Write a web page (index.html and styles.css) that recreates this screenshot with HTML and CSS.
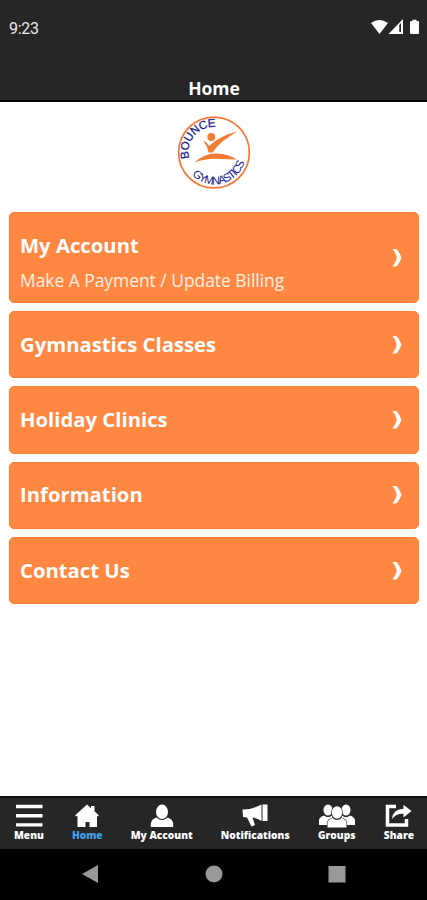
FILE: index.html
```html
<!DOCTYPE html>
<html lang="en">
<head>
  <meta charset="UTF-8">
  <title>Home</title>
  <meta name="viewport" content="width=device-width, initial-scale=1.0">
  <link rel="stylesheet" href="styles.css">
</head>
<body>

  <header class="header">
    <div class="status">
      <span class="time">9:23</span>
      <svg class="status-icons" width="50" height="16" viewBox="0 0 50 16">
        <path d="M0 4Q8-2 17 4L8.500 15z"/>
        <path d="M32 0V15H17.500z"/>
        <path class="signal-gap" d="M28.300 6v7h1.700V4z"/>
        <path d="M39 3q0-1 1-1h1.500V.7h4V2H47q1 0 1 1v11q0 1-1 1h-7q-1 0-1-1z"/>
      </svg>
    </div>
    <h1>Home</h1>
  </header>

  <main>
    <svg class="logo" width="74" height="74" viewBox="0 0 74 74">
      <defs>
        <path id="arc-top" d="M12.200 42.500A25.200 25.200 0 0 1 47 13.200"/>
        <path id="arc-bottom" d="M15 59A31.500 31.500 0 0 0 69 37"/>
      </defs>
      <circle class="ring" cx="37" cy="36.500" r="35.400"/>
      <text class="word-top"><textPath href="#arc-top" textLength="48">BOUNCE</textPath></text>
      <text class="word-bottom"><textPath href="#arc-bottom" textLength="65">GYMNASTICS</textPath></text>
      <circle class="figure" cx="34.300" cy="21" r="3.900"/>
      <path class="figure" d="M26.500 25q3 .5 5.500 5Q43 19.500 60.500 15.500Q43 25 35.500 36.500h-4q-.8-6-5-11.500z"/>
      <path class="figure" d="M17.500 46.500Q28 37 40 37.500Q51 38 60 43.500Q51 43 42 43Q30 42 17.500 46.500z"/>
    </svg>

    <ul class="list">
      <li class="card tall">
        <div>
          <h2>My Account</h2>
          <p>Make A Payment / Update Billing</p>
        </div>
        <svg class="arrow" width="10" height="18" viewBox="0 0 10 18"><path d="M.5 0H4Q6.500 1 9.500 8.800Q6.500 16.500 4 17.500H.5Q4 13 4.800 8.800Q4 4 .5 0z"/></svg>
      </li>
      <li class="card">
        <h2>Gymnastics Classes</h2>
        <svg class="arrow" width="10" height="18" viewBox="0 0 10 18"><path d="M.5 0H4Q6.500 1 9.500 8.800Q6.500 16.500 4 17.500H.5Q4 13 4.800 8.800Q4 4 .5 0z"/></svg>
      </li>
      <li class="card">
        <h2>Holiday Clinics</h2>
        <svg class="arrow" width="10" height="18" viewBox="0 0 10 18"><path d="M.5 0H4Q6.500 1 9.500 8.800Q6.500 16.500 4 17.500H.5Q4 13 4.800 8.800Q4 4 .5 0z"/></svg>
      </li>
      <li class="card">
        <h2>Information</h2>
        <svg class="arrow" width="10" height="18" viewBox="0 0 10 18"><path d="M.5 0H4Q6.500 1 9.500 8.800Q6.500 16.500 4 17.500H.5Q4 13 4.800 8.800Q4 4 .5 0z"/></svg>
      </li>
      <li class="card">
        <h2>Contact Us</h2>
        <svg class="arrow" width="10" height="18" viewBox="0 0 10 18"><path d="M.5 0H4Q6.500 1 9.500 8.800Q6.500 16.500 4 17.500H.5Q4 13 4.800 8.800Q4 4 .5 0z"/></svg>
      </li>
    </ul>
  </main>

  <nav class="tabs">
    <a class="tab">
      <svg width="28" height="24" viewBox="0 0 28 24"><path d="M1 .8h26.500v3.400H1zM1 10h26.500v3.400H1zM1 19.200h26.500v3.400H1z"/></svg>
      <span>Menu</span>
    </a>
    <a class="tab active">
      <svg width="24" height="24" viewBox="0 0 24 24"><path d="M12 .5l4 3.700V2h3.500v5.300L23.500 11v1.200H22V23h-7.500v-5h-4v5H2.500V12.200H.5V11z"/></svg>
      <span>Home</span>
    </a>
    <a class="tab">
      <svg width="24" height="24" viewBox="0 0 24 24"><ellipse cx="12" cy="7.800" rx="6" ry="7.200"/><path d="M.8 23v-3.500Q1.500 15 6.500 13.500Q12 18.500 17.500 13.500Q22.500 15 23.200 19.500V23z"/></svg>
      <span>My Account</span>
    </a>
    <a class="tab">
      <svg width="26" height="24" viewBox="0 0 26 24"><path d="M.5 5.500q8 .5 19-5v16.500Q15 14 10.500 13.500l2.500 7.500-3.500 1.500-4.500-9L1 13z"/><path d="M20.500.5h5v16.500h-5z"/></svg>
      <span>Notifications</span>
    </a>
    <a class="tab">
      <svg class="groups" width="38" height="24" viewBox="0 0 38 24">
        <ellipse cx="10" cy="6" rx="4.500" ry="5.500"/>
        <ellipse cx="28" cy="6" rx="4.500" ry="5.500"/>
        <path d="M1 21v-5q.5-3 5-4.500q4 3.500 8 0l3 9.500zM37 21v-5q-.5-3-5-4.500q-4 3.500-8 0l-3 9.500z"/>
        <g class="front">
          <ellipse cx="19" cy="8.500" rx="5.200" ry="6.200"/>
          <path d="M9.500 23.500v-5q.5-3 5-4.500q4.500 4 9 0q4.500 1.500 5 4.500v5z"/>
        </g>
      </svg>
      <span>Groups</span>
    </a>
    <a class="tab">
      <svg width="27" height="24" viewBox="0 0 27 24"><path class="box" d="M11 2.500H2.500v18.500h19v-6"/><path d="M7 15Q8 5 18.500 4.800V.8L26.500 7l-8 6.500V9.800Q11 9.500 7 15z"/></svg>
      <span>Share</span>
    </a>
  </nav>

  <footer class="system-bar">
    <svg width="18" height="20" viewBox="0 0 18 20"><path d="M17 1v18L1 10z"/></svg>
    <svg width="18" height="20" viewBox="0 0 18 20"><circle cx="9" cy="10" r="8.500"/></svg>
    <svg width="18" height="20" viewBox="0 0 18 20"><path d="M.5 2h17v16.500H.5z"/></svg>
  </footer>

</body>
</html>
```
FILE: styles.css
```css
* {
  margin: 0;
  padding: 0;
  box-sizing: border-box;
}

body {
  font-family: 'Open Sans', sans-serif;
  background: #fff;
  height: 900px;
  display: flex;
  flex-direction: column;
}

/* Header */
.header {
  height: 102px;
  background: #262626;
  border-bottom: 2px solid #050505;
  color: #fff;
}

.status {
  display: flex;
  justify-content: space-between;
  align-items: center;
  height: 56px;
  padding: 0 6px 0 9px;
}

.time {
  font-family: Roboto, sans-serif;
  font-size: 16px;
  letter-spacing: -0.3px;
  color: #e8e8e8;
}

.status-icons {
  fill: #fff;
  margin-bottom: 2px;
}

.signal-gap {
  fill: #262626;
}

h1 {
  font-size: 17.5px;
  line-height: 24px;
  margin-top: 20px;
  padding-left: 1px;
  text-align: center;
}

/* Content */
main {
  flex: 1;
  padding: 14px 8px 0 9px;
}

.logo {
  display: block;
  margin: 0 auto 22px;
}

.ring {
  fill: none;
  stroke: #f47735;
  stroke-width: 1.7;
}

.figure {
  fill: #f47b32;
}

.word-top,
.word-bottom {
  font-family: 'Liberation Sans', sans-serif;
  font-size: 11.5px;
  fill: #23238e;
}

.word-top {
  stroke: #23238e;
  stroke-width: 0.3;
}

.list {
  list-style: none;
  display: flex;
  flex-direction: column;
  gap: 8.2px;
}

.card {
  display: flex;
  align-items: center;
  justify-content: space-between;
  height: 67.1px;
  padding: 0 16px 0 10px;
  background: #ff8742;
  border: 1px solid #fb8030;
  border-radius: 5px;
  color: #fff;
}

.card.tall {
  height: 91px;
}

.card h2 {
  font-size: 20.3px;
  line-height: 28px;
  padding-bottom: 2px;
}

.card p {
  font-size: 17.4px;
  line-height: 24px;
  margin-top: 7px;
  color: #fff0e4;
}

.card.tall h2 {
  margin-top: 7px;
}

.arrow {
  fill: #fff;
}

/* Bottom tabs */
.tabs {
  display: flex;
  justify-content: space-between;
  height: 53px;
  padding: 6px 13px 0 14px;
  background: #262626;
  border-top: 2px solid #111;
}

.tab {
  display: flex;
  flex-direction: column;
  align-items: center;
  color: #fff;
  font-size: 10.2px;
  font-weight: 800;
  line-height: 15px;
}

.tab svg {
  fill: #fff;
}

.tab.active {
  color: #3fa0e6;
}

.groups .front {
  stroke: #262626;
  stroke-width: 1.2;
  paint-order: stroke;
}

.tab .box {
  fill: none;
  stroke: #fff;
  stroke-width: 3.5;
}

/* Android buttons */
.system-bar {
  display: flex;
  justify-content: space-between;
  align-items: center;
  height: 51px;
  padding: 0 81px 2px;
  background: #000;
  fill: #999;
}
```
